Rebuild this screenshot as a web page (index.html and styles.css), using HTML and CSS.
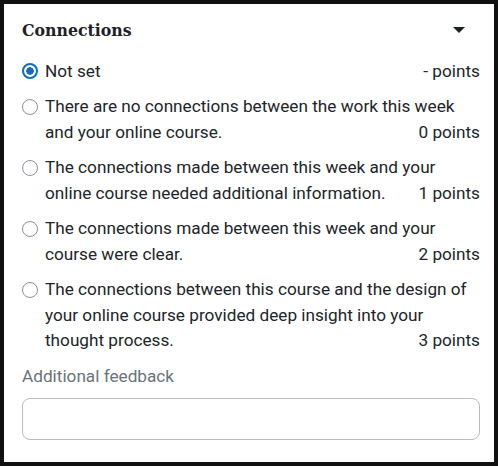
FILE: index.html
```html
<!DOCTYPE html>
<html>
<head>
<meta charset="UTF-8">
<title>Connections</title>
<meta name="viewport" content="width=device-width, initial-scale=1.0">
<link rel="stylesheet" href="styles.css">
</head>
<body>

<div class="frame">
  <div class="head">
    <h3>Connections</h3>
    <span class="caret"></span>
  </div>

  <div class="opts">
    <label class="opt">
      <input type="radio" name="lvl" checked>
      <span class="txt">Not set <span class="pts">- points</span></span>
    </label>
    <label class="opt">
      <input type="radio" name="lvl">
      <span class="txt">There are no connections between the work this week and your online course. <span class="pts">0 points</span></span>
    </label>
    <label class="opt">
      <input type="radio" name="lvl">
      <span class="txt">The connections made between this week and your online course needed additional information. <span class="pts">1 points</span></span>
    </label>
    <label class="opt">
      <input type="radio" name="lvl">
      <span class="txt">The connections made between this week and your course were clear. <span class="pts">2 points</span></span>
    </label>
    <label class="opt">
      <input type="radio" name="lvl">
      <span class="txt">The connections between this course and the design of your online course provided deep insight into your thought process. <span class="pts">3 points</span></span>
    </label>
  </div>

  <div class="fb-label">Additional feedback</div>
  <textarea class="fb"></textarea>
</div>

</body>
</html>
```

FILE: styles.css
```css
body{margin:0;font-family:Roboto,"Liberation Sans",sans-serif;color:#212529;background:#fff}
.frame{
 box-sizing:border-box;width:498px;height:466px;border:4px solid #111;
 padding:15px 14px 0 18px
}
.head{display:flex;justify-content:space-between;align-items:center;height:22px}
.head h3{margin:0;font-family:"DejaVu Serif Condensed","DejaVu Serif",serif;font-weight:bold;font-size:17.5px;color:#1d2125}
.caret{width:0;height:0;border-left:6px solid transparent;border-right:6px solid transparent;border-top:6px solid #1d2125;margin-right:15px}
.opts{margin-top:17.5px}
.opt{display:flex;align-items:flex-start;gap:7px;margin-bottom:10px;font-size:17.2px;line-height:25.5px}
.opt input{
 appearance:none;-webkit-appearance:none;margin:4.75px 0 0;flex:none;
 width:16px;height:16px;border:1.5px solid #8a9099;border-radius:50%;box-sizing:border-box;background:#fff
}
.opt input:checked{border:2px solid #0f6cbf;background:radial-gradient(circle,#0f6cbf 0 3.5px,#fff 4px)}
.txt{flex:1}
.pts{float:right}
.fb-label{color:#6a737b;font-size:17.2px;line-height:24px;margin-top:1px}
.fb{
 display:block;box-sizing:border-box;width:458px;height:42px;margin-top:10px;
 border:1px solid #b8bdc3;border-radius:8px;resize:none;font:inherit
}
```
